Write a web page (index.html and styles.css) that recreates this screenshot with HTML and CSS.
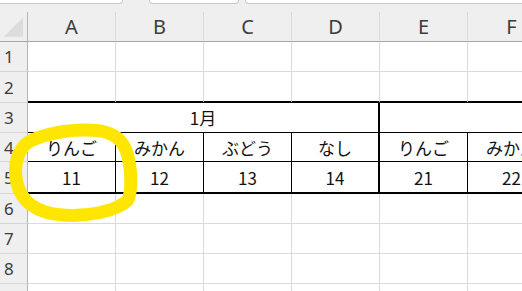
FILE: index.html
```html
<!DOCTYPE html>
<html lang="ja">
<head>
  <meta charset="UTF-8" />
  <title>Sheet</title>
  <link rel="stylesheet" href="styles.css">
</head>
<body>
  <div class="wrap">
    <!-- top strip -->
    <div class="tabs">
      <div class="tab tab-first"></div>
      <div class="tab tab-mid"></div>
      <div class="tab tab-last"></div>
    </div>

    <div class="sheet">
      <!-- column headers -->
      <div class="corner">
        <svg width="28" height="30" viewBox="0 0 28 30"><polygon points="24,5 24,25 4,25" fill="#dcdcdc"/></svg>
      </div>
      <div class="col">A</div>
      <div class="col">B</div>
      <div class="col">C</div>
      <div class="col">D</div>
      <div class="col">E</div>
      <div class="col">F</div>

      <!-- row 1 -->
      <div class="rh">1</div>
      <div class="c"></div><div class="c"></div><div class="c"></div><div class="c"></div><div class="c"></div><div class="c"></div>

      <!-- row 2 -->
      <div class="rh">2</div>
      <div class="c top"></div><div class="c top"></div><div class="c top"></div><div class="c top"></div><div class="c top"></div><div class="c top"></div>

      <!-- row 3 -->
      <div class="rh">3</div>
      <div class="t month span4 thick-r">1月</div>
      <div class="t month span2"></div>

      <!-- row 4 -->
      <div class="rh">4</div>
      <div class="t">りんご</div>
      <div class="t">みかん</div>
      <div class="t">ぶどう</div>
      <div class="t thick-r">なし</div>
      <div class="t">りんご</div>
      <div class="t">みかん</div>

      <!-- row 5 -->
      <div class="rh">5</div>
      <div class="t last">11</div>
      <div class="t last">12</div>
      <div class="t last">13</div>
      <div class="t last thick-r">14</div>
      <div class="t last">21</div>
      <div class="t last">22</div>

      <!-- rows 6-9 -->
      <div class="rh">6</div>
      <div class="c"></div><div class="c"></div><div class="c"></div><div class="c"></div><div class="c"></div><div class="c"></div>
      <div class="rh">7</div>
      <div class="c"></div><div class="c"></div><div class="c"></div><div class="c"></div><div class="c"></div><div class="c"></div>
      <div class="rh">8</div>
      <div class="c"></div><div class="c"></div><div class="c"></div><div class="c"></div><div class="c"></div><div class="c"></div>
      <div class="rh"></div>
      <div class="c"></div><div class="c"></div><div class="c"></div><div class="c"></div><div class="c"></div><div class="c"></div>
    </div>

    <!-- hand-drawn highlight -->
    <svg class="marker" width="522" height="291" viewBox="0 0 522 291">
      <path d="M30,141 C17,149 13,166 17,183 C21,201 36,213 62,215 C88,217 116,211 127,201 C133,193 131,166 127,153 C123,141 116,134 101,131 C76,128 50,132 30,141 Z"
            fill="none" stroke="#ffe600" stroke-width="13" stroke-linecap="round" stroke-linejoin="round"/>
    </svg>
  </div>
</body>
</html>
```

FILE: styles.css
```css
body {
  margin: 0;
  background: #fff;
  overflow: hidden;
  font-family: "Noto Sans CJK JP", "Noto Sans", sans-serif;
}
.wrap {
  position: relative;
  width: 522px;
  height: 291px;
  overflow: hidden;
}
.tabs {
  display: flex;
  width: 556px;
  height: 12px;
  background: #efefef;
}
.tab {
  box-sizing: border-box;
  height: 4px;
  background: #fff;
  border: 1px solid #c8c8c8;
  border-top: none;
  border-radius: 0 0 6px 6px;
}
.tab-first {
  width: 127px;
  border-left: none;
  border-radius: 0 0 6px 0;
}
.tab-mid {
  width: 92px;
  margin-left: 26px;
}
.tab-last {
  width: 320px;
  margin-left: 6px;
  border-right: none;
  border-radius: 0 0 0 6px;
}
.sheet {
  display: grid;
  grid-template-columns: 28px repeat(6, 88px);
  grid-template-rows: 30px 30px 31px 30px 29px 32px 30px 30px 30px 30px;
  width: 556px;
}
.sheet > div {
  box-sizing: border-box;
  display: flex;
  align-items: center;
  justify-content: center;
}
.corner {
  background: #efefef;
  border-right: 1px solid #b4b4b4;
  border-bottom: 1px solid #a6a6a6;
}
.col {
  background: #efefef;
  border-right: 1px solid #dadada;
  border-bottom: 1px solid #a6a6a6;
  font-family: "Noto Sans", sans-serif;
  font-size: 20px;
  color: #3c3c3c;
}
.rh {
  background: #efefef;
  border-right: 1px solid #b4b4b4;
  border-bottom: 1px solid #d6d6d6;
  font-family: "Noto Sans", sans-serif;
  font-size: 17px;
  color: #3c3c3c;
  justify-content: flex-start !important;
  padding-left: 4px;
}
.c {
  border-right: 1px solid #dadada;
  border-bottom: 1px solid #dadada;
}
.c.top {
  border-bottom: 2px solid #000;
}
.t {
  border-right: 1px solid #000;
  border-bottom: 1px solid #000;
  font-size: 17px;
  color: #111;
}
.t.last {
  border-bottom: 2px solid #000;
}
.t.thick-r {
  border-right: 2px solid #000;
}
.span4 {
  grid-column: span 4;
}
.span2 {
  grid-column: span 2;
  border-right: none;
}
.marker {
  position: absolute;
  left: 0;
  top: 0;
  pointer-events: none;
}
```
